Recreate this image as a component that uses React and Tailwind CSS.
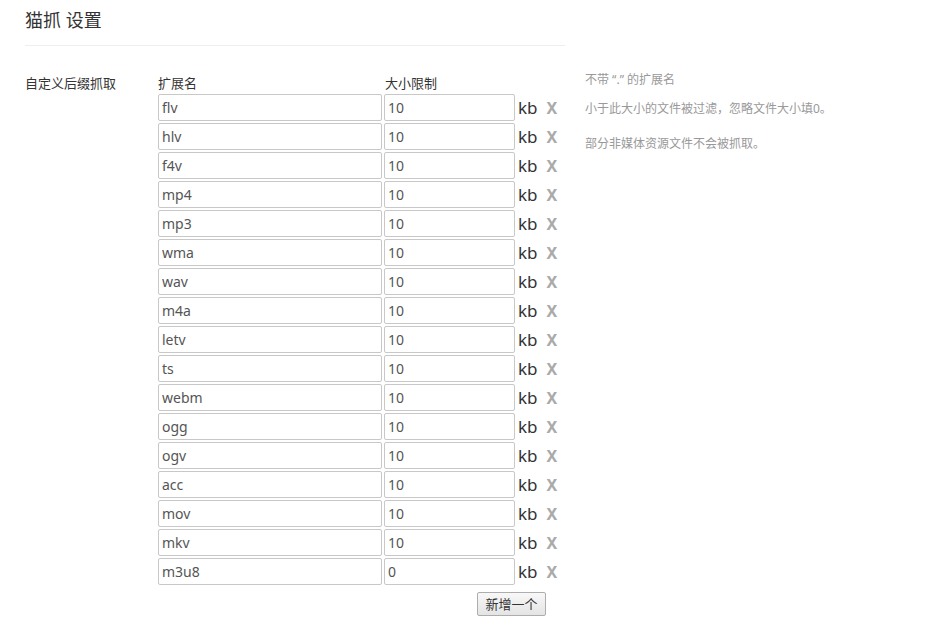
import React, { useState } from 'react';

const initialRows = [
  ['flv', '10'], ['hlv', '10'], ['f4v', '10'], ['mp4', '10'], ['mp3', '10'],
  ['wma', '10'], ['wav', '10'], ['m4a', '10'], ['letv', '10'], ['ts', '10'],
  ['webm', '10'], ['ogg', '10'], ['ogv', '10'], ['acc', '10'], ['mov', '10'],
  ['mkv', '10'], ['m3u8', '0'],
];

const font = { fontFamily: '"Noto Sans", "Noto Sans CJK SC", sans-serif' };

function App() {
  const [rows, setRows] = useState(initialRows.map(([ext, size], i) => ({ id: i, ext, size })));

  const update = (id, key, value) => {
    setRows(prev => prev.map(r => (r.id === id ? { ...r, [key]: value } : r)));
  };

  return (
    <div className="min-h-[632px] bg-white pl-[25px] pt-[7px] text-[#333] font-['Noto_Sans','Noto_Sans_CJK_SC',sans-serif]">
      <h1 className="text-[18px] leading-[26px] font-normal text-[#333]">猫抓 设置</h1>
      <div className="mt-[12px] w-[540px] border-b border-[#eee]" />

      <div className="mt-[28px] flex">
        <div className="w-[133px] text-[13px] leading-[18px] text-[#333]">自定义后缀抓取</div>

        <div className="w-[427px]">
          <div className="flex text-[13px] leading-[18px] text-[#333]">
            <span className="w-[227px]">扩展名</span>
            <span>大小限制</span>
          </div>
          <div className="mt-[2px] flex flex-col gap-[2px]">
            {rows.map(r => (
              <div key={r.id} className="flex items-center">
                <input
                  value={r.ext}
                  onChange={e => update(r.id, 'ext', e.target.value)}
                  style={font}
                  className="h-[27px] w-[224px] rounded-[2px] border border-[#c8c8c8] px-[3px] text-[14px] text-[#555] outline-none"
                />
                <input
                  value={r.size}
                  onChange={e => update(r.id, 'size', e.target.value)}
                  style={font}
                  className="ml-[2px] h-[27px] w-[131px] rounded-[2px] border border-[#c8c8c8] px-[3px] text-[14px] text-[#555] outline-none"
                />
                <span className="ml-[3px] text-[17px] leading-[20px] text-[#333]">kb</span>
                <button
                  onClick={() => setRows(prev => prev.filter(x => x.id !== r.id))}
                  className="ml-[9px] text-[16px] font-bold leading-[20px] text-[#aaa]"
                >
                  X
                </button>
              </div>
            ))}
          </div>
          <button
            onClick={() => setRows(prev => [...prev, { id: Date.now(), ext: '', size: '10' }])}
            className="ml-[319px] mt-[7px] h-[24px] w-[69px] rounded-[2px] border border-[#adadad] bg-gradient-to-b from-[#f8f8f8] to-[#e4e4e4] text-[13px] leading-[20px] text-[#333]"
          >
            新增一个
          </button>
        </div>

        <div className="text-[12px] leading-[16px] text-[#999]">
          <p className="-mt-[2px]">不带 “.” 的扩展名</p>
          <p className="mt-[13px]">小于此大小的文件被过滤，忽略文件大小填0。</p>
          <p className="mt-[19px]">部分非媒体资源文件不会被抓取。</p>
        </div>
      </div>
    </div>
  );
}

export default App;
